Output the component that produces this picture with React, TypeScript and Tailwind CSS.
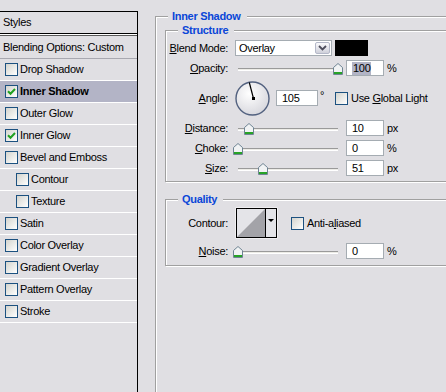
import type { ReactNode } from "react"

const layerStyles = [
  { name: "Drop Shadow" },
  { name: "Inner Shadow", checked: true, selected: true },
  { name: "Outer Glow" },
  { name: "Inner Glow", checked: true },
  { name: "Bevel and Emboss" },
  { name: "Contour", sub: true },
  { name: "Texture", sub: true },
  { name: "Satin" },
  { name: "Color Overlay" },
  { name: "Gradient Overlay" },
  { name: "Pattern Overlay" },
  { name: "Stroke" },
]

export default function App() {
  return (
    <div className="flex h-[392px] w-[446px] overflow-hidden bg-[#e0dfe3] font-['Liberation_Sans',Arial,sans-serif] text-[11px] leading-[13px] tracking-[-0.3px] text-black">
      <StyleList />

      <fieldset className="ml-[17px] mt-[10px] h-[400px] w-[310px] shrink-0 border border-[#a0a0a0] shadow-[inset_1px_1px_0_#fff,1px_1px_0_#fff]">
        <Legend>Inner Shadow</Legend>

        <fieldset className="ml-[9px] mt-[1px] w-[290px] border border-[#a0a0a0] pb-[5px] pt-[3px] shadow-[inset_1px_1px_0_#fff,1px_1px_0_#fff]">
          <Legend>Structure</Legend>

          <Row label={<><u>B</u>lend Mode:</>} className="h-[16px]">
            <div className="flex h-[16px] w-[97px] items-center border border-[#a5acb2] bg-white">
              <span className="flex-1 pl-[3px]">Overlay</span>
              <span className="mr-[1px] flex h-[12px] w-[15px] items-center justify-center rounded-[2px] border border-[#b4b8c8] bg-linear-to-b from-[#fafafc] to-[#cfd0da]">
                <svg width="9" height="6" viewBox="0 0 9 6">
                  <path d="M1 1 L4.5 4.5 L8 1" stroke="#4d4d5c" strokeWidth="1.8" fill="none" />
                </svg>
              </span>
            </div>
            <div className="ml-[3px] h-[16px] w-[33px] bg-black" />
          </Row>

          <Row label={<><u>O</u>pacity:</>} className="mt-[4px] h-[16px]">
            <Slider at={103} />
            <Field w="w-[38px]"><span className="bg-[#b2b4c6] px-px">100</span></Field>
            <span className="ml-[3px]">%</span>
          </Row>

          <Row label={<><u>A</u>ngle:</>} className="mt-[5px] h-[34px]">
            <Dial />
            <div className="ml-[6px]"><Field w="w-[42px]">105</Field></div>
            <span className="ml-[2px] w-[8px] self-start pt-[8px]">°</span>
            <span className="ml-[7px]"><CheckBox /></span>
            <span className="ml-[3px]">Use <u>G</u>lobal Light</span>
          </Row>

          <Row label={<><u>D</u>istance:</>} className="mt-[5px] h-[16px]">
            <Slider at={14} />
            <Field w="w-[38px]">10</Field>
            <span className="ml-[3px]">px</span>
          </Row>

          <Row label={<><u>C</u>hoke:</>} className="mt-[4px] h-[16px]">
            <Slider at={3} />
            <Field w="w-[38px]">0</Field>
            <span className="ml-[3px]">%</span>
          </Row>

          <Row label={<><u>S</u>ize:</>} className="mt-[4px] h-[16px]">
            <Slider at={28} />
            <Field w="w-[38px]">51</Field>
            <span className="ml-[3px]">px</span>
          </Row>
        </fieldset>

        <fieldset className="ml-[9px] mt-[11px] w-[290px] border border-[#a0a0a0] pb-[6px] pt-[1px] shadow-[inset_1px_1px_0_#fff,1px_1px_0_#fff]">
          <Legend>Quality</Legend>

          <Row label="Contour:" className="h-[32px]">
            <ContourPicker />
            <span className="ml-[13px]"><CheckBox /></span>
            <span className="ml-[3px]">Anti-a<u>l</u>iased</span>
          </Row>

          <Row label={<><u>N</u>oise:</>} className="mt-[4px] h-[16px]">
            <Slider at={3} />
            <Field w="w-[38px]">0</Field>
            <span className="ml-[3px]">%</span>
          </Row>
        </fieldset>
      </fieldset>
    </div>
  )
}

function StyleList() {
  return (
    <div className="mt-[11px] flex w-[138px] shrink-0 flex-col border-r border-t border-black">
      <div className="flex h-[21px] items-center pl-[3px]">Styles</div>
      <div className="h-[3px] border-b border-t border-b-[#5a5a5a] border-t-black bg-white" />
      <div className="flex h-[23px] items-center border-b border-[#a8a8b0] pl-[3px]">Blending Options: Custom</div>
      {layerStyles.map((s) => (
        <div
          key={s.name}
          className={`flex h-[22px] items-center border-b border-white ${s.sub ? "pl-[16px]" : "pl-[5px]"} ${s.selected ? "bg-[#b3b4c6] font-bold" : ""}`}
        >
          <CheckBox checked={s.checked} />
          <span className="ml-[2px]">{s.name}</span>
        </div>
      ))}
    </div>
  )
}

function Legend({ children }: { children: ReactNode }) {
  return <legend className="ml-[12px] bg-[#e0dfe3] pl-[4px] pr-[6px] text-[11px] font-bold leading-[13px] text-[#0a46d8]">{children}</legend>
}

function Row({ label, className, children }: { label: ReactNode; className?: string; children: ReactNode }) {
  return (
    <div className={`flex items-center ${className ?? ""}`}>
      <span className="w-[62px] shrink-0 text-right">{label}</span>
      <div className="ml-[7px] flex items-center self-stretch">{children}</div>
    </div>
  )
}

function CheckBox({ checked }: { checked?: boolean }) {
  return (
    <span className="flex h-[13px] w-[13px] shrink-0 items-center justify-center border border-[#1c5180] bg-linear-to-br from-[#d4d4ce] to-white">
      {checked && (
        <svg width="9" height="9" viewBox="0 0 9 9">
          <path d="M1 4.2 L3.5 6.8 L8 2" stroke="#21a121" strokeWidth="2" fill="none" />
        </svg>
      )}
    </span>
  )
}

function Field({ w, children }: { w: string; children: ReactNode }) {
  return <div className={`flex h-[16px] items-center border border-[#a5acb2] bg-white pl-[5px] ${w}`}>{children}</div>
}

function Slider({ at }: { at: number }) {
  return (
    <div className="relative flex h-[16px] w-[111px] items-center">
      <div className="ml-[3px] mt-[2px] h-[3px] w-[100px] border-b border-t border-b-white border-t-[#9a9a9a] bg-[#ecebe6]" />
      <svg className="absolute top-[3px]" style={{ left: at - 5 }} width="10" height="12" viewBox="0 0 10 12">
        <path d="M5 0.5 L9.5 4.5 V11.5 H0.5 V4.5 Z" fill="#f1f3f4" stroke="#6f8494" />
        <rect x="1" y="9" width="8" height="2" fill="#27a327" />
      </svg>
    </div>
  )
}

function Dial() {
  return (
    <svg width="35" height="35" viewBox="0 0 35 35">
      <defs>
        <radialGradient id="dial" cx="40%" cy="35%" r="70%">
          <stop offset="0" stopColor="#ffffff" />
          <stop offset="1" stopColor="#d6d6dc" />
        </radialGradient>
      </defs>
      <circle cx="17.5" cy="17.5" r="16.5" fill="url(#dial)" stroke="#52617f" strokeWidth="1.4" />
      <line x1="18.5" y1="17.5" x2="14.3" y2="1.5" stroke="#000" strokeWidth="1.2" />
      <rect x="17" y="16" width="3" height="3" fill="#000" />
    </svg>
  )
}

function ContourPicker() {
  return (
    <svg width="43" height="32" viewBox="0 0 43 32">
      <rect x="0.5" y="0.5" width="42" height="31" fill="#fff" />
      <rect x="1.5" y="1.5" width="40" height="29" fill="#e4e4e8" stroke="#000" />
      <path d="M2 30 L30 2 V30 Z" fill="#a3a3a8" />
      <line x1="30.5" y1="1.5" x2="30.5" y2="30.5" stroke="#000" />
      <path d="M33 12 H39 L36 15 Z" fill="#000" />
    </svg>
  )
}
